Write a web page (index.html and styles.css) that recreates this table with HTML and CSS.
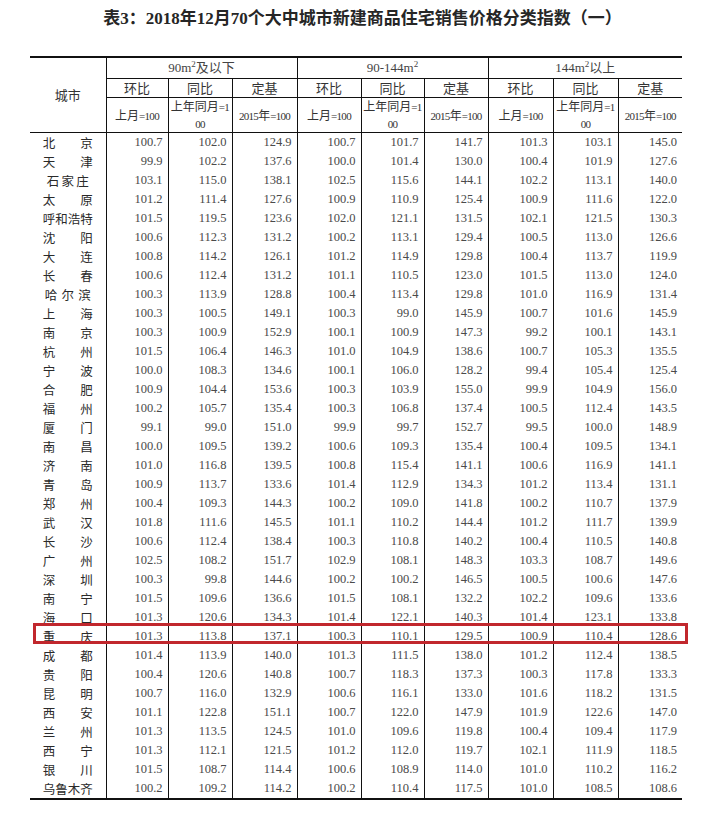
FILE: index.html
```html
<!DOCTYPE html>
<html lang="zh-CN">
<head>
<meta charset="utf-8">
<title>表3</title>
<link rel="stylesheet" href="styles.css">
</head>
<body>
<h1 class="title">表3：2018年12月70个大中城市新建商品住宅销售价格分类指数（一）</h1>
<div class="wrap">
<table class="idx">
<colgroup>
<col class="w-city"><col class="w62"><col class="w64"><col class="w65"><col class="w64"><col class="w63"><col class="w64"><col class="w65"><col class="w65"><col class="w64">
</colgroup>
<thead>
<tr class="h1">
<th rowspan="3" class="city-h">城市</th>
<th colspan="3" class="grp">90m<sup>2</sup>及以下</th>
<th colspan="3" class="grp">90-144m<sup>2</sup></th>
<th colspan="3" class="grp last">144m<sup>2</sup>以上</th>
</tr>
<tr class="h2">
<th>环比</th><th>同比</th><th>定基</th>
<th>环比</th><th>同比</th><th>定基</th>
<th>环比</th><th>同比</th><th class="last">定基</th>
</tr>
<tr class="h3">
<th>上月<span class="d">=100</span></th><th>上年同月<span class="d">=1</span><br><span class="d">00</span></th><th><span class="d">2015</span>年<span class="d">=100</span></th>
<th>上月<span class="d">=100</span></th><th>上年同月<span class="d">=1</span><br><span class="d">00</span></th><th><span class="d">2015</span>年<span class="d">=100</span></th>
<th>上月<span class="d">=100</span></th><th>上年同月<span class="d">=1</span><br><span class="d">00</span></th><th class="last"><span class="d">2015</span>年<span class="d">=100</span></th>
</tr>
</thead>
<tbody>
<tr><td><span class="cn">北京</span></td><td>100.7</td><td>102.0</td><td>124.9</td><td>100.7</td><td>101.7</td><td>141.7</td><td>101.3</td><td>103.1</td><td>145.0</td></tr>
<tr><td><span class="cn">天津</span></td><td>99.9</td><td>102.2</td><td>137.6</td><td>100.0</td><td>101.4</td><td>130.0</td><td>100.4</td><td>101.9</td><td>127.6</td></tr>
<tr><td><span class="cn c3">石家庄</span></td><td>103.1</td><td>115.0</td><td>138.1</td><td>102.5</td><td>115.6</td><td>144.1</td><td>102.2</td><td>113.1</td><td>140.0</td></tr>
<tr><td><span class="cn">太原</span></td><td>101.2</td><td>111.4</td><td>127.6</td><td>100.9</td><td>110.9</td><td>125.4</td><td>100.9</td><td>111.6</td><td>122.0</td></tr>
<tr><td><span class="cn">呼和浩特</span></td><td>101.5</td><td>119.5</td><td>123.6</td><td>102.0</td><td>121.1</td><td>131.5</td><td>102.1</td><td>121.5</td><td>130.3</td></tr>
<tr><td><span class="cn">沈阳</span></td><td>100.6</td><td>112.3</td><td>131.2</td><td>100.2</td><td>113.1</td><td>129.4</td><td>100.5</td><td>113.0</td><td>126.6</td></tr>
<tr><td><span class="cn">大连</span></td><td>100.8</td><td>114.2</td><td>126.1</td><td>101.2</td><td>114.9</td><td>129.8</td><td>100.4</td><td>113.7</td><td>119.9</td></tr>
<tr><td><span class="cn">长春</span></td><td>100.6</td><td>112.4</td><td>131.2</td><td>101.1</td><td>110.5</td><td>123.0</td><td>101.5</td><td>113.0</td><td>124.0</td></tr>
<tr><td><span class="cn c3w">哈尔滨</span></td><td>100.3</td><td>113.9</td><td>128.8</td><td>100.4</td><td>113.4</td><td>129.8</td><td>101.0</td><td>116.9</td><td>131.4</td></tr>
<tr><td><span class="cn">上海</span></td><td>100.3</td><td>100.5</td><td>149.1</td><td>100.3</td><td>99.0</td><td>145.9</td><td>100.7</td><td>101.6</td><td>145.9</td></tr>
<tr><td><span class="cn">南京</span></td><td>100.3</td><td>100.9</td><td>152.9</td><td>100.1</td><td>100.9</td><td>147.3</td><td>99.2</td><td>100.1</td><td>143.1</td></tr>
<tr><td><span class="cn">杭州</span></td><td>101.5</td><td>106.4</td><td>146.3</td><td>101.0</td><td>104.9</td><td>138.6</td><td>100.7</td><td>105.3</td><td>135.5</td></tr>
<tr><td><span class="cn">宁波</span></td><td>100.0</td><td>108.3</td><td>134.6</td><td>100.1</td><td>106.0</td><td>128.2</td><td>99.4</td><td>105.4</td><td>125.4</td></tr>
<tr><td><span class="cn">合肥</span></td><td>100.9</td><td>104.4</td><td>153.6</td><td>100.3</td><td>103.9</td><td>155.0</td><td>99.9</td><td>104.9</td><td>156.0</td></tr>
<tr><td><span class="cn">福州</span></td><td>100.2</td><td>105.7</td><td>135.4</td><td>100.3</td><td>106.8</td><td>137.4</td><td>100.5</td><td>112.4</td><td>143.5</td></tr>
<tr><td><span class="cn">厦门</span></td><td>99.1</td><td>99.0</td><td>151.0</td><td>99.9</td><td>99.7</td><td>152.7</td><td>99.5</td><td>100.0</td><td>148.9</td></tr>
<tr><td><span class="cn">南昌</span></td><td>100.0</td><td>109.5</td><td>139.2</td><td>100.6</td><td>109.3</td><td>135.4</td><td>100.4</td><td>109.5</td><td>134.1</td></tr>
<tr><td><span class="cn">济南</span></td><td>101.0</td><td>116.8</td><td>139.5</td><td>100.8</td><td>115.4</td><td>141.1</td><td>100.6</td><td>116.9</td><td>141.1</td></tr>
<tr><td><span class="cn">青岛</span></td><td>100.9</td><td>113.7</td><td>133.6</td><td>101.4</td><td>112.9</td><td>134.3</td><td>101.2</td><td>113.4</td><td>131.1</td></tr>
<tr><td><span class="cn">郑州</span></td><td>100.4</td><td>109.3</td><td>144.3</td><td>100.2</td><td>109.0</td><td>141.8</td><td>100.2</td><td>110.7</td><td>137.9</td></tr>
<tr><td><span class="cn">武汉</span></td><td>101.8</td><td>111.6</td><td>145.5</td><td>101.1</td><td>110.2</td><td>144.4</td><td>101.2</td><td>111.7</td><td>139.9</td></tr>
<tr><td><span class="cn">长沙</span></td><td>100.6</td><td>112.4</td><td>138.4</td><td>100.3</td><td>110.8</td><td>140.2</td><td>100.4</td><td>110.5</td><td>140.8</td></tr>
<tr><td><span class="cn">广州</span></td><td>102.5</td><td>108.2</td><td>151.7</td><td>102.9</td><td>108.1</td><td>148.3</td><td>103.3</td><td>108.7</td><td>149.6</td></tr>
<tr><td><span class="cn">深圳</span></td><td>100.3</td><td>99.8</td><td>144.6</td><td>100.2</td><td>100.2</td><td>146.5</td><td>100.5</td><td>100.6</td><td>147.6</td></tr>
<tr><td><span class="cn">南宁</span></td><td>101.5</td><td>109.6</td><td>136.6</td><td>101.5</td><td>108.1</td><td>132.2</td><td>102.2</td><td>109.6</td><td>133.6</td></tr>
<tr><td><span class="cn">海口</span></td><td>101.3</td><td>120.6</td><td>134.3</td><td>101.4</td><td>122.1</td><td>140.3</td><td>101.4</td><td>123.1</td><td>133.8</td></tr>
<tr><td><span class="cn">重庆</span></td><td>101.3</td><td>113.8</td><td>137.1</td><td>100.3</td><td>110.1</td><td>129.5</td><td>100.9</td><td>110.4</td><td>128.6</td></tr>
<tr><td><span class="cn">成都</span></td><td>101.4</td><td>113.9</td><td>140.0</td><td>101.3</td><td>111.5</td><td>138.0</td><td>101.2</td><td>112.4</td><td>138.5</td></tr>
<tr><td><span class="cn">贵阳</span></td><td>100.4</td><td>120.6</td><td>140.8</td><td>100.7</td><td>118.3</td><td>137.3</td><td>100.3</td><td>117.8</td><td>133.3</td></tr>
<tr><td><span class="cn">昆明</span></td><td>100.7</td><td>116.0</td><td>132.9</td><td>100.6</td><td>116.1</td><td>133.0</td><td>101.6</td><td>118.2</td><td>131.5</td></tr>
<tr><td><span class="cn">西安</span></td><td>101.1</td><td>122.8</td><td>151.1</td><td>100.7</td><td>122.0</td><td>147.9</td><td>101.9</td><td>122.6</td><td>147.0</td></tr>
<tr><td><span class="cn">兰州</span></td><td>101.3</td><td>113.5</td><td>124.5</td><td>101.0</td><td>109.6</td><td>119.8</td><td>100.4</td><td>109.4</td><td>117.9</td></tr>
<tr><td><span class="cn">西宁</span></td><td>101.3</td><td>112.1</td><td>121.5</td><td>101.2</td><td>112.0</td><td>119.7</td><td>102.1</td><td>111.9</td><td>118.5</td></tr>
<tr><td><span class="cn">银川</span></td><td>101.5</td><td>108.7</td><td>114.4</td><td>100.6</td><td>108.9</td><td>114.0</td><td>101.0</td><td>110.2</td><td>116.2</td></tr>
<tr><td><span class="cn">乌鲁木齐</span></td><td>100.2</td><td>109.2</td><td>114.2</td><td>100.2</td><td>110.4</td><td>117.5</td><td>101.0</td><td>108.5</td><td>108.6</td></tr>
</tbody>
</table>
<div class="mark"></div>
</div>
</body>
</html>
```
FILE: styles.css
```css
html, body {
  margin: 0;
  padding: 0;
  background: #ffffff;
}
body {
  width: 721px;
  height: 819px;
  overflow: hidden;
  color: #333333;
  font-family: "Liberation Serif", "Noto Sans CJK SC", serif;
}
.title {
  margin: 0;
  height: 56px;
  box-sizing: border-box;
  padding-top: 9px;
  padding-left: 4px;
  text-align: center;
  font-size: 17px;
  line-height: 20px;
  font-weight: bold;
  color: #262626;
  font-family: "Liberation Serif", "Noto Sans CJK SC", serif;
}
.wrap {
  position: relative;
  margin-left: 30px;
  width: 652px;
}
.idx {
  width: 652px;
  table-layout: fixed;
  border-collapse: collapse;
  border-top: 2px solid #111111;
  border-bottom: 2px solid #111111;
}
.w-city { width: 76px; }
.w62 { width: 62px; }
.w63 { width: 63px; }
.w64 { width: 64px; }
.w65 { width: 65px; }
.idx th, .idx td {
  padding: 0;
  border-left: 1px solid #111111;
  border-right: 1px solid #111111;
}
.idx th:first-child, .idx td:first-child { border-left: none; }
.idx .last, .idx td:last-child { border-right: none; }
.idx th {
  font-weight: normal;
  text-align: center;
  color: #333333;
  font-family: "Noto Sans CJK SC", sans-serif;
  font-size: 13px;
  line-height: 16px;
  border-bottom: 1px solid #111111;
}
.idx .h1 th { height: 20px; }
.idx .h1 .grp {
  font-family: "Liberation Serif", "Noto Sans CJK SC", serif;
  font-size: 13px;
  color: #444444;
  vertical-align: middle;
}
.grp sup {
  font-size: 9px;
  line-height: 0;
  vertical-align: 5px;
}
.idx .h2 th { height: 18px; font-size: 13px; }
.idx .h3 th {
  height: 32px;
  font-size: 12px;
  line-height: 16px;
  color: #333333;
}
.d {
  font-family: "Liberation Serif", serif;
  font-size: 11px;
  letter-spacing: -0.7px;
}
.city-h { font-size: 13px; }
.idx td {
  height: 19px;
  text-align: right;
  padding-right: 5px;
  font-size: 12.5px;
  line-height: 19px;
  color: #4a4a4a;
  font-family: "Liberation Serif", serif;
}
.idx td:first-child {
  text-align: center;
  padding-right: 0;
}
.cn {
  display: block;
  width: 50px;
  margin: 0 auto;
  text-align: justify;
  text-align-last: justify;
  font-family: "Noto Sans CJK SC", sans-serif;
  font-size: 12.5px;
  color: #2a2a2a;
}
.cn.c3 { width: 42px; }
.cn.c3w { width: 46px; }
.mark {
  position: absolute;
  left: 3px;
  top: 567px;
  width: 655px;
  height: 21px;
  box-sizing: border-box;
  border: 3px solid #c1272d;
}
```
